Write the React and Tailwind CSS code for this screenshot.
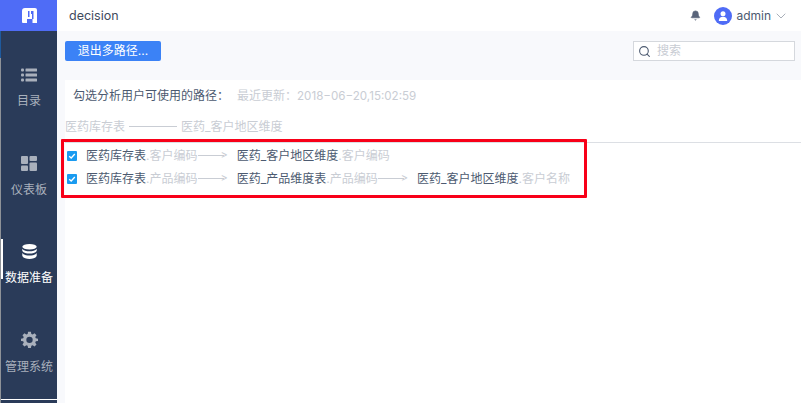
import { Bell, ChevronDown, Search } from "lucide-react";

const font = { fontFamily: '"Inter", "Noto Sans CJK SC", sans-serif' };

const Logo = () => (
  <svg width="15" height="15" viewBox="0 0 15 15" fill="white">
    <path
      fillRule="evenodd"
      d="M3 0H13Q15 0 15 2V15H10.500V11H11.500V3H9V6H10V11H5V15H1Q0 15 0 14V3Q0 0 3 0ZM6 3H7.500V9H6Z"
    />
  </svg>
);

const ListIcon = () => (
  <svg width="16" height="14" viewBox="0 0 16 14" fill="#a9b0bc">
    <rect x="0" y="0.5" width="3" height="3" rx="1" />
    <rect x="0" y="5.5" width="3" height="3" rx="1" />
    <rect x="0" y="10.5" width="3" height="3" rx="1" />
    <rect x="4.5" y="0.5" width="11.5" height="3" rx="0.5" />
    <rect x="4.5" y="5.5" width="11.5" height="3" rx="0.5" />
    <rect x="4.5" y="10.5" width="11.5" height="3" rx="0.5" />
  </svg>
);

const DashIcon = () => (
  <svg width="16" height="15" viewBox="0 0 16 15" fill="#a9b0bc">
    <rect x="0" y="0" width="7" height="8" rx="1" />
    <rect x="8.5" y="0" width="7.5" height="5" rx="1" />
    <rect x="0" y="9.5" width="7" height="5.5" rx="1" />
    <rect x="8.5" y="6.5" width="7.5" height="8.5" rx="1" />
  </svg>
);

const DbIcon = () => (
  <svg width="15" height="15" viewBox="0 0 15 15" fill="white">
    <ellipse cx="7.5" cy="2.8" rx="7.2" ry="2.8" />
    <path d="M0.3 4.7C1.5 6.6 4.5 7.2 7.5 7.2S13.500 6.600 14.700 4.700V7C13.500 9 10.500 9.600 7.500 9.600S1.500 9 0.300 7Z" />
    <path d="M0.3 9C1.500 11 4.500 11.600 7.500 11.600S13.500 11 14.700 9V12C13.500 14.200 10.500 15 7.500 15S1.500 14.200 0.300 12Z" />
  </svg>
);

const GearIcon = () => (
  <svg width="17" height="17" viewBox="0 0 24 24" fill="#a9b0bc">
    <path
      fillRule="evenodd"
      d="M10 1h4l.6 3.100 1.900.8L19.100 3.100 21.900 5.900 20.100 8.500l.8 1.900L24 11v3l-3.100.6-.8 1.900 1.800 2.600-2.800 2.800-2.600-1.800-1.900.8L14 23.900h-4l-.6-3.100-1.900-.8-2.600 1.800-2.800-2.800 1.800-2.600-.8-1.900L0 14v-3l3.100-.6.8-1.900L2.100 5.900 4.900 3.100 7.500 4.900l1.900-.8ZM12 8a4.500 4.500 0 1 0 0 9 4.500 4.500 0 0 0 0-9Z"
    />
  </svg>
);

const navItems = [
  { label: "目录", icon: <ListIcon /> },
  { label: "仪表板", icon: <DashIcon /> },
  { label: "数据准备", icon: <DbIcon />, active: true },
  { label: "管理系统", icon: <GearIcon /> },
];

const Check = () => (
  <span className="flex h-[10px] w-[10px] shrink-0 items-center justify-center rounded-[1px] bg-[#1a9bf0]">
    <svg width="8" height="8" viewBox="0 0 8 8" fill="none" stroke="white" strokeWidth="1.300">
      <path d="M1.200 4.200 3.200 6 6.800 2" />
    </svg>
  </span>
);

const Table = ({ name, field }) => (
  <span>
    <span className="text-[#4c5a70]">{name}</span>
    <span className="text-[#c9cdd4]">.{field}</span>
  </span>
);

const Arrow = () => (
  <span className="mr-[9px] flex items-center text-[#c9cdd4]">
    <span className="h-px w-[26px] bg-[#c9cdd4]" />
    <span className="-ml-[3px] text-[11px] leading-none">&gt;</span>
  </span>
);

export default function App() {
  return (
    <div style={font} className="flex h-[403px] w-[801px] overflow-hidden bg-white">
      <div className="flex w-px shrink-0 flex-col bg-[#8e9298]">
        <div className="h-[31px] bg-[#4f6cf6]" />
        <div className="h-[27px] bg-[#1e5a9e]" />
      </div>
      <aside className="flex w-[56px] shrink-0 flex-col bg-[#2a3b59]">
        <div className="flex h-[31px] items-center justify-center bg-[#4f6cf6]">
          <Logo />
        </div>
        <nav className="flex flex-1 flex-col pt-[13px]">
          {navItems.map((item) => (
            <div
              key={item.label}
              className={`relative flex h-[88px] flex-col items-center justify-center gap-[12px] text-[12px] leading-[14px] ${
                item.active ? "text-white" : "text-[#a9b0bc]"
              }`}
            >
              {item.active && <span className="absolute left-0 top-[19px] h-[40px] w-[2px] bg-white" />}
              {item.icon}
              <span>{item.label}</span>
            </div>
          ))}
        </nav>
        <div className="mb-[3px] h-px bg-white" />
      </aside>

      <div className="flex min-w-0 flex-1 flex-col">
        <header className="flex h-[31px] items-center justify-between bg-white pl-[12px] pr-[12px] text-[#4c5a70]">
          <span className="pt-[1px] text-[12.500px] text-[#3f4a5e]">decision</span>
          <div className="flex items-center text-[12px]">
            <Bell size={11} fill="#59647a" strokeWidth={1.500} className="mr-[13px] text-[#59647a]" />
            <span className="mr-[4px] flex h-[18px] w-[18px] items-center justify-center rounded-full bg-[#4f6cf6]">
              <svg width="10" height="10" viewBox="0 0 10 10" fill="white">
                <circle cx="5" cy="2.800" r="2.500" />
                <path d="M0.800 10C0.800 7 2.500 5.800 5 5.800S9.200 7 9.200 10Z" />
              </svg>
            </span>
            <span>admin</span>
            <ChevronDown size={16} strokeWidth={1} className="ml-[2px] text-[#7d8695]" />
          </div>
        </header>

        <main className="flex flex-1 flex-col bg-[#f8f9fc] pl-[8px]">
          <div className="flex h-[49px] items-start justify-between pt-[10px] pr-[6px]">
            <button className="h-[20px] w-[96px] rounded-[2px] bg-[#3b82f6] text-[12px] leading-[20px] text-white">
              退出多路径...
            </button>
            <div className="flex h-[20px] w-[162px] items-center border border-[#d5d8dd] bg-white pl-[4px] text-[12px] text-[#c8ccd3]">
              <Search size={13} strokeWidth={2} className="mr-[6px] text-[#4c5a70]" />
              搜索
            </div>
          </div>

          <section className="relative flex-1 bg-white text-[12px]">
            <div className="flex h-[32px] items-center pl-[8px]">
              <span className="text-[#4c5a70]">勾选分析用户可使用的路径：</span>
              <span className="ml-[8px] text-[#c9cdd4]">
                最近更新：<span className="text-[11.600px]">2018−06−20,15:02:59</span>
              </span>
            </div>
            <div className="flex h-[31px] items-center border-b border-[#dcdfe4] pb-[1px] text-[#c9cdd4]">
              医药库存表
              <span className="mx-[4px] h-px w-[48px] bg-[#c9cdd4]" />
              医药_客户地区维度
            </div>

            <div className="pl-[2px] pt-[1px]">
              <div className="flex h-[23px] items-center">
                <Check />
                <span className="ml-[9px] flex items-center">
                  <Table name="医药库存表" field="客户编码" />
                  <Arrow />
                  <Table name="医药_客户地区维度" field="客户编码" />
                </span>
              </div>
              <div className="flex h-[23px] items-center">
                <Check />
                <span className="ml-[9px] flex items-center">
                  <Table name="医药库存表" field="产品编码" />
                  <Arrow />
                  <Table name="医药_产品维度表" field="产品编码" />
                  <Arrow />
                  <Table name="医药_客户地区维度" field="客户名称" />
                </span>
              </div>
            </div>

            <div className="absolute left-[-4px] top-[59px] h-[59px] w-[526px] rounded-[1px] border-[3px] border-[#f80018]" />
          </section>
        </main>
      </div>
    </div>
  );
}
